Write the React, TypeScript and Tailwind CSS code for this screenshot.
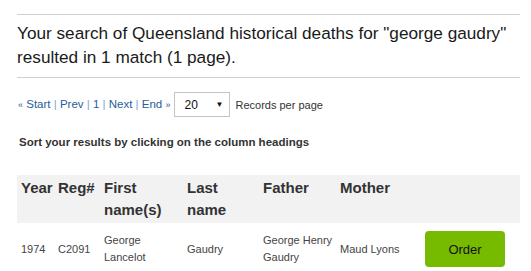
import React from "react";

export default function App() {
  const f = { fontFamily: '"Liberation Sans", Arial, sans-serif' };
  const cols = "grid grid-cols-[37px_46px_83px_76px_77px_85px_99px]";
  return (
    <div className="bg-white w-[531px] h-[271px] overflow-hidden" style={f}>
      <div className="ml-[17px] w-[503px] pt-[14px]">
        <div className="border-t border-[#d0d0d0]" />
        <div className="text-[17.2px] leading-[24px] text-[#1a1a1a] pt-[6px] pb-[8px] whitespace-nowrap">
          Your search of Queensland historical deaths for "george gaudry"
          <br />
          resulted in 1 match (1 page).
        </div>
        <div className="border-t border-[#d0d0d0]" />
        <div className="flex items-center mt-[14px] leading-[14px] h-[25px]">
          <span className="ml-[1px] text-[11.5px] text-[#2a5d9c] whitespace-nowrap">
            <span className="text-[9px]">«</span> Start <span className="text-[#7aa7d4]">|</span> Prev{" "}
            <span className="text-[#7aa7d4]">|</span> 1 <span className="text-[#7aa7d4]">|</span> Next{" "}
            <span className="text-[#7aa7d4]">|</span> End <span className="text-[9px]">»</span>
          </span>
          <div className="ml-[4px] w-[56px] h-[25px] border border-[#c4c4c4] flex items-center pl-[9px] pr-[6px] justify-between text-[#111] shrink-0">
            <span className="text-[12px]">20</span>
            <span className="text-[8px]">▼</span>
          </div>
          <span className="ml-[5px] text-[11px] text-[#333]">Records per page</span>
        </div>
        <div className="mt-[18px] ml-[2px] text-[11.5px] leading-[14px] font-bold text-[#333]">
          Sort your results by clicking on the column headings
        </div>
        <div className="mt-[26px]">
          <div className={`${cols} bg-[#f2f2f2] text-[15px] leading-[22px] font-bold text-[#333] py-[2px]`}>
            <div className="pl-[4px]">Year</div>
            <div className="pl-[4px]">Reg#</div>
            <div className="pl-[4px]">First<br />name(s)</div>
            <div className="pl-[4px]">Last<br />name</div>
            <div className="pl-[4px]">Father</div>
            <div className="pl-[4px]">Mother</div>
            <div></div>
          </div>
          <div className={`${cols} items-center text-[11px] leading-[17px] text-[#444] pt-[8px]`}>
            <div className="pl-[4px]">1974</div>
            <div className="pl-[4px]">C2091</div>
            <div className="pl-[4px] whitespace-nowrap">George<br />Lancelot</div>
            <div className="pl-[4px]">Gaudry</div>
            <div className="pl-[4px] whitespace-nowrap">George Henry<br />Gaudry</div>
            <div className="pl-[4px] whitespace-nowrap">Maud Lyons</div>
            <div className="pl-[4px]">
              <div className="w-[80px] h-[36px] rounded-[4px] bg-[#77bb00] flex items-center justify-center text-[13px] text-[#111]">
                Order
              </div>
            </div>
          </div>
        </div>
      </div>
    </div>
  );
}
